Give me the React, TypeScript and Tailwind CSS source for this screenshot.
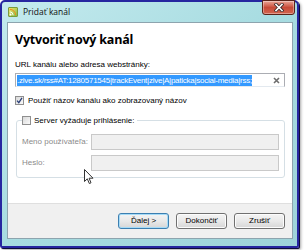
import React from 'react';

function Check({ checked }: { checked?: boolean }) {
  return (
    <span className="w-[9px] h-[9px] shrink-0 border border-[#8f8f8f] bg-gradient-to-br from-[#d9d9d9] to-[#fafafa] flex items-center justify-center">
      {checked && (
        <svg width="7" height="7" viewBox="0 0 7 7">
          <path d="M1 3.6 L2.8 5.6 L6 0.8" fill="none" stroke="#2b3f78" strokeWidth="1.3" />
        </svg>
      )}
    </span>
  );
}

function Btn({ label, primary }: { label: string; primary?: boolean }) {
  return (
    <div
      className={
        'w-[51px] h-[16px] rounded-[3px] border flex items-center justify-center text-[8px] bg-gradient-to-b from-[#f4f4f4] via-[#e9e9e9] to-[#d6d6d6] ' +
        (primary
          ? 'border-[#3c7fb1] shadow-[inset_0_0_0_1px_#a6dbf7]'
          : 'border-[#707070] shadow-[inset_0_0_0_1px_#fcfcfc]')
      }
    >
      {label}
    </div>
  );
}

export default function App() {
  return (
    <div className="w-[304px] h-[250px] bg-white font-['Liberation_Sans',Arial,sans-serif] text-[8px] text-black leading-none">
      <div className="w-[299px] h-[248px] rounded-t-[5px] rounded-b-[2px] border-2 border-[#2626a0] shadow-[1px_1px_0_#0c0c3a,2px_2px_3px_rgba(0,0,0,0.35)] bg-gradient-to-br from-[#c4eaee] via-[#a7dce1] to-[#9ed3d9] flex flex-col">
        {/* title bar */}
        <div className="h-[20px] flex items-start shrink-0">
          <div className="mt-[5px] ml-[6px] w-[10px] h-[10px] rounded-[1px] bg-gradient-to-br from-[#f3e36a] to-[#7dbb4a] border border-[#7a9c3a] flex items-end justify-start overflow-hidden">
            <svg width="8" height="8" viewBox="0 0 8 8">
              <circle cx="1.5" cy="6.5" r="1" fill="#fff" />
              <path d="M0.8 3.8 A3.6 3.6 0 0 1 4.2 7.2" fill="none" stroke="#fff" strokeWidth="1" />
              <path d="M0.8 1.3 A6 6 0 0 1 6.7 7.2" fill="none" stroke="#f08a1c" strokeWidth="1" />
            </svg>
          </div>
          <span className="ml-[5px] mt-[6px] font-['Open_Sans',sans-serif] text-[8.5px] text-[#111]">Pridať kanál</span>
          <div className="ml-auto mr-[2px] -mt-[2px] w-[33px] h-[15px] rounded-b-[3px] border border-[#5a2318] bg-gradient-to-b from-[#e9a597] via-[#c74a38] to-[#d2654f] shadow-[inset_0_0_0_1px_rgba(255,255,255,0.35)] flex items-center justify-center">
            <svg width="10" height="9" viewBox="0 0 10 9">
              <path d="M2 1.5 L8 7.5 M8 1.5 L2 7.5" stroke="#3b2a2a" strokeWidth="3.2" strokeLinecap="square" />
              <path d="M2 1.5 L8 7.5 M8 1.5 L2 7.5" stroke="#fff" strokeWidth="1.6" strokeLinecap="square" />
            </svg>
          </div>
        </div>

        {/* client */}
        <div className="flex-1 ml-[5px] mr-[4px] mb-[7px] border border-[#8da4ae] bg-white flex flex-col relative">
          <div className="flex-1 px-[7px] flex flex-col">
            <div className="mt-[9px] font-['Open_Sans',sans-serif] text-[12.5px] font-bold leading-[16px] tracking-[-0.2px]">Vytvoriť nový kanál</div>
            <div className="mt-[12px] leading-[10px]">URL kanálu alebo adresa webstránky:</div>
            <div className="mt-[3px] h-[14px] border border-[#abadb3] border-b-[#e3e9ef] flex items-center pl-[1px] pr-[4px]">
              <div className="flex-1 flex">
                <span className="bg-[#3399ff] text-white whitespace-nowrap leading-[11px] tracking-[-0.25px]">
                  .zive.sk/rss#AT:1280571545|trackEvent|zive|A|paticka|social-media|rss;
                </span>
              </div>
              <svg className="ml-[4px]" width="7" height="7" viewBox="0 0 7 7">
                <path d="M1 1 L6 6 M6 1 L1 6" stroke="#6d6d6d" strokeWidth="1.6" />
              </svg>
            </div>
            <div className="mt-[9px] flex items-center gap-[4px]">
              <Check checked />
              <span>Použiť názov kanálu ako zobrazovaný názov</span>
            </div>
            <div className="mt-[15px] ml-[1px] h-[58px] border border-[#d5dfe5] rounded-[3px] px-[5px] flex flex-col">
              <div className="-mt-[5px] flex items-center gap-[3px] self-start bg-white pr-[2px]">
                <Check />
                <span>Server vyžaduje prihlásenie:</span>
              </div>
              <div className="mt-[9px] flex items-center">
                <span className="w-[69px] whitespace-nowrap text-[#8a8a8a]">Meno používateľa:</span>
                <div className="flex-1 h-[16px] border border-[#c9c9c9] bg-[#f0f0f0]" />
              </div>
              <div className="mt-[5px] flex items-center">
                <span className="w-[69px] text-[#8a8a8a]">Heslo:</span>
                <div className="flex-1 h-[16px] border border-[#c9c9c9] bg-[#f0f0f0]" />
              </div>
            </div>
          </div>
          <div className="h-[35px] shrink-0 border-t border-[#dfdfdf] bg-[#f0f0f0] flex items-center justify-end gap-[7px] pr-[7px]">
            <Btn label="Ďalej >" primary />
            <Btn label="Dokončiť" />
            <Btn label="Zrušiť" />
          </div>
          {/* mouse pointer */}
          <svg className="absolute left-[76px] top-[146px]" width="10" height="16" viewBox="0 0 10 16">
            <path d="M0.5 0.5 L0.5 12.5 L3.3 9.8 L5.3 14.5 L7 13.8 L5.1 9.2 L9 9.2 Z" fill="#fff" stroke="#333" strokeWidth="1" strokeLinejoin="round" />
          </svg>
        </div>
      </div>
    </div>
  );
}
